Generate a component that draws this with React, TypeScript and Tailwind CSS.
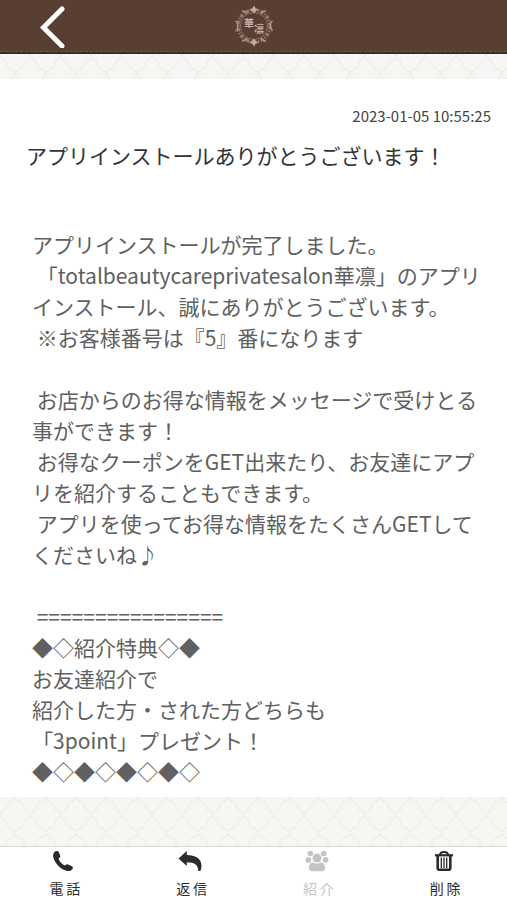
const message = `アプリインストールが完了しました。
 「totalbeautycareprivatesalon華凛」のアプリインストール、誠にありがとうございます。
 ※お客様番号は『5』番になります

 お店からのお得な情報をメッセージで受けとる事ができます！
 お得なクーポンをGET出来たり、お友達にアプリを紹介することもできます。
 アプリを使ってお得な情報をたくさんGETしてくださいね♪

 ================
◆◇紹介特典◇◆
お友達紹介で
紹介した方・された方どちらも
「3point」プレゼント！
◆◇◆◇◆◇◆◇`

function PhoneIcon() {
  return (
    <svg viewBox="0 0 22 22" className="size-[22px]" fill="currentColor" aria-hidden="true">
      <path d="M3.500 1.200C5 .700 6.200 1 6.700 2L8.200 5.600C8.600 6.700 8.200 7.600 6.700 8.500C6.500 10.500 10.500 15 13 15.400C14.200 14.200 15 14 16 14.400L20 16.300C21 16.900 21 17.800 20.600 18.700C19.500 20.900 16.800 21.600 14.200 20.800C8 18.800 2.800 13.200 1.300 7.300C.700 4.700 1.500 2.200 3.500 1.200Z" />
    </svg>
  )
}

function ReplyIcon() {
  return (
    <svg viewBox="0 0 24 22" className="h-[22px] w-6" fill="currentColor" aria-hidden="true">
      <path d="M.500 8.500L8.800 1V5C17.500 5 22.500 8.500 23.300 14C23.600 16.500 23.300 19 22.300 21H20.300C20.300 15.500 17 12.200 8.800 12.200V16Z" />
    </svg>
  )
}

function FriendsIcon() {
  return (
    <svg viewBox="0 0 24 22" className="h-[22px] w-6" fill="currentColor" aria-hidden="true">
      <circle cx="5.300" cy="3.500" r="2.800" />
      <circle cx="18.700" cy="3.500" r="2.800" />
      <circle cx="3.400" cy="9.900" r="2.800" />
      <circle cx="20.600" cy="9.900" r="2.800" />
      <circle cx="12" cy="8" r="4.500" />
      <path d="M4 17.500c0-3 1.600-4.900 4.200-4.900 2.200 1.400 5.400 1.400 7.600 0C18.400 12.600 20 14.500 20 17.500c0 2.500-1 3.700-3 3.700H7c-2 0-3-1.200-3-3.700z" />
    </svg>
  )
}

function TrashIcon() {
  return (
    <svg viewBox="0 0 20 22" className="h-[22px] w-5" fill="none" stroke="currentColor" aria-hidden="true">
      <path d="M6 5Q6 1.900 10 1.900T14 5" strokeWidth="2" />
      <path d="M1 5.300H19" strokeWidth="2.200" />
      <path d="M3.700 6V18Q3.700 19.800 5.500 19.800H14.500Q16.300 19.800 16.300 18V6" strokeWidth="2.600" />
      <path d="M7.300 7.500V18M10 7.500V18M12.700 7.500V18" strokeWidth="1.300" />
    </svg>
  )
}

function Logo() {
  return (
    <svg viewBox="0 0 40 42" className="h-[42px] w-10" fill="none" stroke="#ad9488" aria-label="華凛" role="img">
      <circle cx="20" cy="21" r="13.500" strokeWidth="0.800" opacity="0.7" />
      <circle cx="20" cy="21" r="16" strokeWidth="3.200" strokeDasharray="3.400 1.400 1.200 1.400" opacity="0.7" />
      <path d="M20 0.500l1.800 3 3 .800-3 1.700-1.800 2.500-1.800-2.500-3-1.700 3-.800zM20 41.500l1.800-3 3-.800-3-1.700-1.800-2.500-1.800 2.500-3 1.700 3 .800z" fill="#c4ada1" stroke="none" />
      <path d="M8 6q4 0 5 3M32 6q-4 0-5 3M8 36q4 0 5-3M32 36q-4 0-5-3M1.500 16q3 1 2 5q1 4-2 5M38.500 16q-3 1-2 5q1 4 2 5" strokeWidth="1.400" />
      <text x="10" y="22" fontSize="10" fontWeight="700" fill="#c4ada1" stroke="none">華</text>
      <text x="20" y="28" fontSize="10" fontWeight="700" fill="#c4ada1" stroke="none">凛</text>
    </svg>
  )
}

// 背景の格子模様
function Lattice({ id, y }: { id: string; y: number }) {
  return (
    <svg className="absolute inset-0 h-full w-full" aria-hidden="true">
      <defs>
        <pattern id={id} width="30.400" height="36" y={y} patternUnits="userSpaceOnUse">
          <path
            d="M15.200 0C16 4 19 5 22 6C25 8 24 12 25 13C28 14 30 15 30.400 18C30 21 28 22 25 23C24 24 25 28 22 30C19 31 16 32 15.200 36C14.400 32 11.400 31 8.400 30C5.400 28 6.400 24 5.400 23C2.400 22 .400 21 0 18C.400 15 2.400 14 5.400 13C6.400 12 5.400 8 8.400 6C11.400 5 14.400 4 15.200 0Z"
            fill="none"
            stroke="#eeede8"
            strokeWidth="1.500"
          />
        </pattern>
      </defs>
      <rect width="100%" height="100%" fill={`url(#${id})`} />
    </svg>
  )
}

const tabs = [
  { label: '電話', icon: <PhoneIcon />, disabled: false },
  { label: '返信', icon: <ReplyIcon />, disabled: false },
  { label: '紹介', icon: <FriendsIcon />, disabled: true },
  { label: '削除', icon: <TrashIcon />, disabled: false }
]

export default function App() {
  return (
    <div
      lang="ja"
      className="flex min-h-screen flex-col bg-[#f6f6f5] font-['Noto_Sans_CJK_JP',sans-serif]"
    >
      <header className="border-b-2 border-[#3f2a22] bg-[#593e33]">
        <div className="grid h-[52px] grid-cols-3 items-center border-b border-dashed border-[#6f5549]">
          <button type="button" aria-label="戻る" className="ml-9 w-8 text-white">
            <svg viewBox="0 0 32 44" className="h-11 w-8" fill="none" stroke="currentColor" strokeWidth="5">
              <path d="M26 5L7.500 23.500L26 42" strokeLinecap="round" />
            </svg>
          </button>
          <div className="flex justify-center">
            <Logo />
          </div>
        </div>
      </header>

      <div className="relative h-[25px]">
        <Lattice id="lattice-top" y={-16} />
      </div>

      <main className="bg-white pt-[25px]">
        <p className="pr-4 text-right text-[15px] leading-6 text-[#444]">2023-01-05 10:55:25</p>
        <h1 className="mt-3 pl-[26px] text-[21px] leading-[31px] text-[#333]">
          アプリインストールありがとうございます！
        </h1>
        <p className="mt-[58px] whitespace-pre-wrap pr-6 pb-2.5 pl-8 text-[21px] leading-[31px] text-[#606060]">
          {message}
        </p>
      </main>

      <div className="relative min-h-12 flex-1">
        <Lattice id="lattice-bottom" y={0} />
      </div>

      <nav className="grid h-[54px] grid-cols-4 border-t border-[#d8d8d6] bg-white">
        {tabs.map((tab) => (
          <button
            key={tab.label}
            type="button"
            disabled={tab.disabled}
            className={`flex flex-col items-center gap-1 pt-[3px] ${tab.disabled ? 'text-[#c4c4c4]' : 'text-[#2b2b2b]'}`}
          >
            {tab.icon}
            <span className="pl-1.5 text-[14px] leading-6 tracking-[3px]">{tab.label}</span>
          </button>
        ))}
      </nav>
    </div>
  )
}
